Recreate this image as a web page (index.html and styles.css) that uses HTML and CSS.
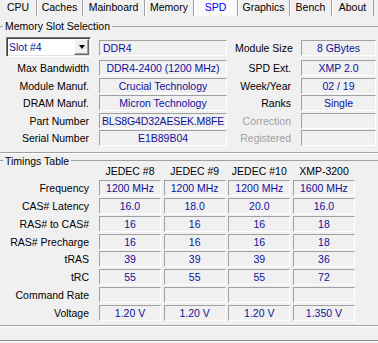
FILE: index.html
```html
<!DOCTYPE html>
<html>
<head>
    <title>CPU-Z SPD</title>
    <link rel="stylesheet" href="styles.css">
</head>
<body>
    <div class="tabs">
        <div class="tab t-cpu">CPU</div>
        <div class="tab t-caches">Caches</div>
        <div class="tab t-main">Mainboard</div>
        <div class="tab t-mem">Memory</div>
        <div class="tab t-spd active">SPD</div>
        <div class="tab t-gfx">Graphics</div>
        <div class="tab t-bench">Bench</div>
        <div class="tab t-about">About</div>
    </div>
    <div class="panel">
        <fieldset class="group slot">
            <legend>Memory Slot Selection</legend>
            <div class="slot-grid">
                <div class="combo">
                    <span class="combo-text">Slot #4</span>
                    <span class="drop"><span class="arrow"></span></span>
                </div>
                <div class="field left first">DDR4</div>
                <div class="label first">Module Size</div>
                <div class="field first">8 GBytes</div>

                <div class="label">Max Bandwidth</div>
                <div class="field">DDR4-2400 (1200 MHz)</div>
                <div class="label">SPD Ext.</div>
                <div class="field">XMP 2.0</div>

                <div class="label">Module Manuf.</div>
                <div class="field">Crucial Technology</div>
                <div class="label">Week/Year</div>
                <div class="field">02 / 19</div>

                <div class="label">DRAM Manuf.</div>
                <div class="field">Micron Technology</div>
                <div class="label">Ranks</div>
                <div class="field">Single</div>

                <div class="label">Part Number</div>
                <div class="field tight">BLS8G4D32AESEK.M8FE</div>
                <div class="label off">Correction</div>
                <div class="field"></div>

                <div class="label">Serial Number</div>
                <div class="field">E1B89B04</div>
                <div class="label off">Registered</div>
                <div class="field"></div>
            </div>
        </fieldset>

        <fieldset class="group timings">
            <legend>Timings Table</legend>
            <div class="timing-grid">
                <div></div>
                <div class="head">JEDEC #8</div>
                <div class="head">JEDEC #9</div>
                <div class="head">JEDEC #10</div>
                <div class="head">XMP-3200</div>

                <div class="label">Frequency</div>
                <div class="field">1200 MHz</div>
                <div class="field">1200 MHz</div>
                <div class="field">1200 MHz</div>
                <div class="field">1600 MHz</div>

                <div class="label">CAS# Latency</div>
                <div class="field">16.0</div>
                <div class="field">18.0</div>
                <div class="field">20.0</div>
                <div class="field">16.0</div>

                <div class="label">RAS# to CAS#</div>
                <div class="field">16</div>
                <div class="field">16</div>
                <div class="field">16</div>
                <div class="field">18</div>

                <div class="label">RAS# Precharge</div>
                <div class="field">16</div>
                <div class="field">16</div>
                <div class="field">16</div>
                <div class="field">18</div>

                <div class="label">tRAS</div>
                <div class="field">39</div>
                <div class="field">39</div>
                <div class="field">39</div>
                <div class="field">36</div>

                <div class="label">tRC</div>
                <div class="field">55</div>
                <div class="field">55</div>
                <div class="field">55</div>
                <div class="field">72</div>

                <div class="label">Command Rate</div>
                <div class="field"></div>
                <div class="field"></div>
                <div class="field"></div>
                <div class="field"></div>

                <div class="label">Voltage</div>
                <div class="field">1.20 V</div>
                <div class="field">1.20 V</div>
                <div class="field">1.20 V</div>
                <div class="field">1.350 V</div>
            </div>
        </fieldset>
    </div>
</body>
</html>
```
FILE: styles.css
```css
body {
    margin: 0;
    width: 378px;
    height: 343px;
    overflow: hidden;
    background-color: #f0f0f0;
    font-family: "Liberation Sans", Arial, sans-serif;
    font-size: 10.5px;
    color: #000;
}

/* tab strip, cut at the top */
.tabs {
    display: flex;
    height: 16px;
}
.tab {
    flex: none;
    box-sizing: border-box;
    height: 16px;
    line-height: 15px;
    text-align: center;
    white-space: nowrap;
    border-right: 1px solid #a0a0a0;
    box-shadow: inset 1px 0 0 #fff;
}
.tab.active {
    background-color: #fafafa;
    color: #0000ff;
}
.t-cpu { width: 37px; box-shadow: none; }
.t-caches { width: 46px; }
.t-main { width: 62px; }
.t-mem { width: 49px; }
.t-spd { width: 44px; }
.t-gfx { width: 52px; }
.t-bench { width: 42px; }
.t-about { width: 42px; }

.panel {
    width: 378px;
    padding: 5px 0 14px;
    border-bottom: 1px solid #838383;
    box-shadow: 0 1px 0 #fff;
}

/* group boxes, their side edges lie outside the picture */
.group {
    margin: 0;
    width: 378px;
    min-width: 0;
    box-sizing: border-box;
    border: 1px solid #a0a0a0;
    border-left: none;
    border-right: none;
    box-shadow: 0 1px 0 #fff;
}
.group legend {
    padding: 0 2px;
    margin-left: 3px;
    line-height: 10px;
}
.group.slot {
    padding: 6px 0 5.6px 0;
}
.group.timings {
    margin-top: 3px;
    padding: 0 0 4px 0;
}

.slot-grid {
    display: grid;
    grid-template-columns: 91px 128px 58px 75px;
    grid-template-rows: 21.4px repeat(5, 16px);
    column-gap: 8px;
    row-gap: 1.6px;
}
.first {
    margin-top: 3px;
}

.label {
    line-height: 16px;
    text-align: right;
    padding-right: 2px;
    white-space: nowrap;
}
.label.off {
    color: #a0a0a0;
}

.field {
    box-sizing: border-box;
    height: 16px;
    border: 1px solid;
    border-color: #a0a0a0 #fff #fff #a0a0a0;
    line-height: 14px;
    text-align: center;
    color: #10109a;
    white-space: nowrap;
    overflow: hidden;
}
.field.left {
    text-align: left;
    padding-left: 3px;
}
.field.tight {
    letter-spacing: -0.15px;
}

/* slot combo box */
.combo {
    align-self: start;
    display: flex;
    align-items: center;
    justify-content: space-between;
    box-sizing: border-box;
    margin-left: 6px;
    width: 85px;
    height: 20px;
    padding: 0 1px;
    background-color: #fff;
    border: 1px solid;
    border-color: #7a7a7a #fff #fff #7a7a7a;
    box-shadow: inset 1px 1px 0 #404040, inset -1px -1px 0 #e3e3e3;
}
.combo-text {
    padding-left: 1px;
    color: #10109a;
    line-height: 16px;
}
.drop {
    display: flex;
    align-items: center;
    justify-content: center;
    box-sizing: border-box;
    width: 15px;
    height: 16px;
    background-color: #f0f0f0;
    border: 1px solid;
    border-color: #fff #696969 #696969 #fff;
    box-shadow: inset -1px -1px 0 #a0a0a0;
}
.arrow {
    width: 0;
    height: 0;
    border-top: 4px solid #000;
    border-left: 3.5px solid transparent;
    border-right: 3.5px solid transparent;
}

/* timings table */
.timing-grid {
    display: grid;
    grid-template-columns: 96.33px repeat(4, 62px);
    grid-template-rows: 12.14px repeat(8, 16px);
    column-gap: 2.67px;
    row-gap: 1.86px;
}
.timing-grid .label {
    padding-right: 7.33px;
}
.head {
    line-height: 11px;
    text-align: center;
    white-space: nowrap;
}
```
